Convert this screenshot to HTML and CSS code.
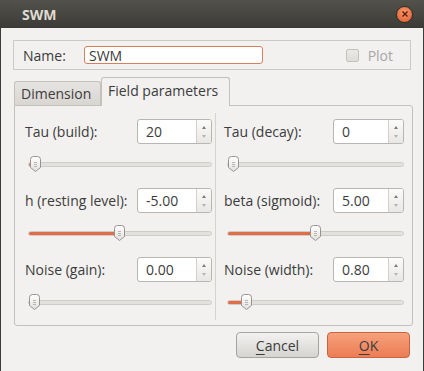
FILE: index.html
```html
<!DOCTYPE html>
<html lang="en">
  <head>
    <meta charset="UTF-8" />
    <title>SWM</title>
    <link rel="stylesheet" href="styles.css">
  </head>
  <body>
    <div class="window">
      <div class="titlebar">
        <span class="title">SWM</span>
        <span class="close">
          <svg width="8" height="8" viewBox="0 0 8 8"><path d="M1.5 1.5 L6.5 6.5 M6.5 1.5 L1.5 6.5" stroke="#5a1c08" stroke-width="1.4" /></svg>
        </span>
      </div>
      <div class="content">
        <div class="name-frame">
          <label class="name-label" for="name">Name:</label>
          <input class="name-input" id="name" type="text" value="SWM" />
          <span class="plot"><span class="check"></span>Plot</span>
        </div>

        <div class="tabs">
          <div class="tab">Dimension</div>
          <div class="tab active">Field parameters</div>
        </div>
        <div class="notebook">
          <div class="column left">
            <div class="row">
              <div class="field"><span>Tau (build):</span>
                <div class="spin"><span class="val">20</span><span class="arrows"><i class="up"></i><i class="down"></i></span></div></div>
              <div class="slider"><div class="track"><div class="fill" style="width: 7px"></div></div><div class="thumb" style="left: 1px"></div></div>
            </div>
            <div class="row">
              <div class="field"><span>h (resting level):</span>
                <div class="spin"><span class="val">-5.00</span><span class="arrows"><i class="up"></i><i class="down"></i></span></div></div>
              <div class="slider"><div class="track"><div class="fill" style="width: 91px"></div></div><div class="thumb" style="left: 85px"></div></div>
            </div>
            <div class="row">
              <div class="field"><span>Noise (gain):</span>
                <div class="spin"><span class="val">0.00</span><span class="arrows"><i class="up"></i><i class="down"></i></span></div></div>
              <div class="slider"><div class="track"><div class="fill" style="width: 0"></div></div><div class="thumb" style="left: 0"></div></div>
            </div>
          </div>
          <div class="sep"></div>
          <div class="column right">
            <div class="row">
              <div class="field"><span>Tau (decay):</span>
                <div class="spin"><span class="val">0</span><span class="arrows"><i class="up"></i><i class="down"></i></span></div></div>
              <div class="slider"><div class="track"><div class="fill" style="width: 0"></div></div><div class="thumb" style="left: 0"></div></div>
            </div>
            <div class="row">
              <div class="field"><span>beta (sigmoid):</span>
                <div class="spin"><span class="val">5.00</span><span class="arrows"><i class="up"></i><i class="down"></i></span></div></div>
              <div class="slider"><div class="track"><div class="fill" style="width: 88px"></div></div><div class="thumb" style="left: 82px"></div></div>
            </div>
            <div class="row">
              <div class="field"><span>Noise (width):</span>
                <div class="spin"><span class="val">0.80</span><span class="arrows"><i class="up"></i><i class="down"></i></span></div></div>
              <div class="slider"><div class="track"><div class="fill" style="width: 19px"></div></div><div class="thumb" style="left: 13px"></div></div>
            </div>
          </div>
        </div>

        <div class="buttons">
          <button class="btn cancel"><u>C</u>ancel</button>
          <button class="btn ok"><u>O</u>K</button>
        </div>
      </div>
    </div>
  </body>
</html>
```

FILE: styles.css
```css
* {
  box-sizing: border-box;
  margin: 0;
  padding: 0;
}
body {
  width: 424px;
  height: 371px;
  background-color: #3c3b37;
  font-family: 'Open Sans', 'DejaVu Sans', sans-serif;
  font-size: 14px;
  color: #3c3c3c;
  overflow: hidden;
}
.window {
  width: 424px;
  height: 371px;
  display: flex;
  flex-direction: column;
}
.titlebar {
  height: 28px;
  display: flex;
  align-items: center;
  justify-content: space-between;
  padding: 0 11px 0 22px;
  background: linear-gradient(#52514c, #3c3b37);
}
.title {
  color: #dfdbd2;
  font-weight: bold;
  font-size: 14px;
}
.close {
  width: 17px;
  height: 17px;
  border-radius: 50%;
  background: radial-gradient(circle at 50% 35%, #f69b6d, #e0582a);
  border: 1px solid #2e2d2a;
  display: flex;
  align-items: center;
  justify-content: center;
}
.content {
  flex: 1;
  background-color: #f2f1f0;
  margin: 0 1px;
  padding: 12px 12px 0 12px;
}
.name-frame {
  height: 30px;
  border: 1px solid #cdc9c5;
  display: flex;
  align-items: center;
  padding-left: 9px;
}
.name-label {
  width: 61px;
}
.name-input {
  width: 179px;
  height: 18px;
  border: 1px solid #d4805e;
  border-radius: 3px;
  padding-left: 4px;
  font: inherit;
  color: #3c3c3c;
  background: #fff;
}
.plot {
  margin-left: auto;
  margin-right: 17px;
  display: flex;
  align-items: center;
  color: #a9a6a2;
}
.check {
  width: 13px;
  height: 13px;
  border: 1px solid #c5c2be;
  border-radius: 2px;
  background: linear-gradient(#ebe9e7, #dedcd9);
  margin-right: 9px;
}
.tabs {
  display: flex;
  align-items: flex-end;
  margin-top: 6px;
  padding-left: 1px;
  height: 29px;
}
.tab {
  height: 24px;
  padding: 0 6px;
  display: flex;
  align-items: center;
  border: 1px solid #c4c0bb;
  border-bottom: none;
  border-radius: 3px 3px 0 0;
  background: linear-gradient(#e6e4e1, #d9d6d2);
  width: 87px;
}
.tab.active {
  height: 29px;
  width: 129px;
  padding-left: 6px;
  padding-bottom: 3px;
  background: #f2f1f0;
  position: relative;
  top: 1px;
}
.notebook {
  height: 221px;
  margin-left: 1px;
  width: 399px;
  border: 1px solid #c4c0bb;
  border-radius: 0 3px 3px 3px;
  display: flex;
  padding-top: 13px;
}
.column {
  display: flex;
  flex-direction: column;
  gap: 11px;
}
.column.left {
  width: 200px;
  padding: 0 3px 0 10px;
}
.column.right {
  width: 195px;
  padding: 0 7px 0 8px;
}
.sep {
  width: 1px;
  margin: -6px 0 5px 0;
  background-color: #d6d3cf;
}
.field {
  height: 25px;
  display: flex;
  align-items: center;
  justify-content: space-between;
}
.spin {
  height: 25px;
  border: 1px solid #b9b5b0;
  border-radius: 3px;
  background: #fff;
  display: flex;
}
.left .spin {
  width: 75px;
}
.right .spin {
  width: 71px;
}
.val {
  flex: 1;
  padding-left: 8px;
  line-height: 23px;
}
.arrows {
  width: 15px;
  border-left: 1px solid #d3d0cc;
  border-radius: 0 2px 2px 0;
  background: linear-gradient(#fbfbfa, #e9e7e5);
  display: flex;
  flex-direction: column;
  align-items: center;
  justify-content: space-between;
  padding: 6px 0 5px;
}
.arrows i {
  width: 0;
  height: 0;
  border-left: 2px solid transparent;
  border-right: 2px solid transparent;
}
.arrows .up {
  border-bottom: 3px solid #7d7a76;
}
.arrows .down {
  border-top: 3px solid #b6b3af;
}
.slider {
  position: relative;
  height: 26px;
  margin: 7px 0 0 3px;
  display: flex;
  align-items: center;
}
.track {
  flex: 1;
  height: 5px;
  border: 1px solid #d0cdc9;
  border-radius: 3px;
  background: #e3e1de;
  overflow: hidden;
}
.fill {
  height: 100%;
  background-color: #e06d45;
}
.thumb {
  position: absolute;
  top: 4px;
  width: 13px;
  height: 18px;
  background: url("data:image/svg+xml;utf8,<svg xmlns='http://www.w3.org/2000/svg' width='13' height='18'><defs><linearGradient id='g' x1='0' y1='0' x2='0' y2='1'><stop offset='0' stop-color='%23ffffff'/><stop offset='1' stop-color='%23e2e0dd'/></linearGradient></defs><path d='M1.5 4.5 Q1.5 1.5 4.5 1.5 H8.5 Q11.5 1.5 11.5 4.5 V12.5 L6.5 16.5 L1.5 12.5 Z' fill='url(%23g)' stroke='%23979390'/><path d='M5 7.5 H8 M5 9.5 H8 M5 11.5 H8' stroke='%23b9b6b2'/></svg>") no-repeat;
}
.buttons {
  display: flex;
  justify-content: flex-end;
  gap: 8px;
  margin-top: 6px;
  padding-right: 1px;
}
.btn {
  width: 83px;
  height: 26px;
  border-radius: 4px;
  font: inherit;
  color: #3c3c3c;
}
.btn u {
  text-underline-offset: 3px;
}
.cancel {
  border: 1px solid #a6a39f;
  background: linear-gradient(#f3f2f1, #d6d4d0);
}
.ok {
  border: 1px solid #c8643f;
  background: linear-gradient(#f7a17c, #ec7d55);
}
```
